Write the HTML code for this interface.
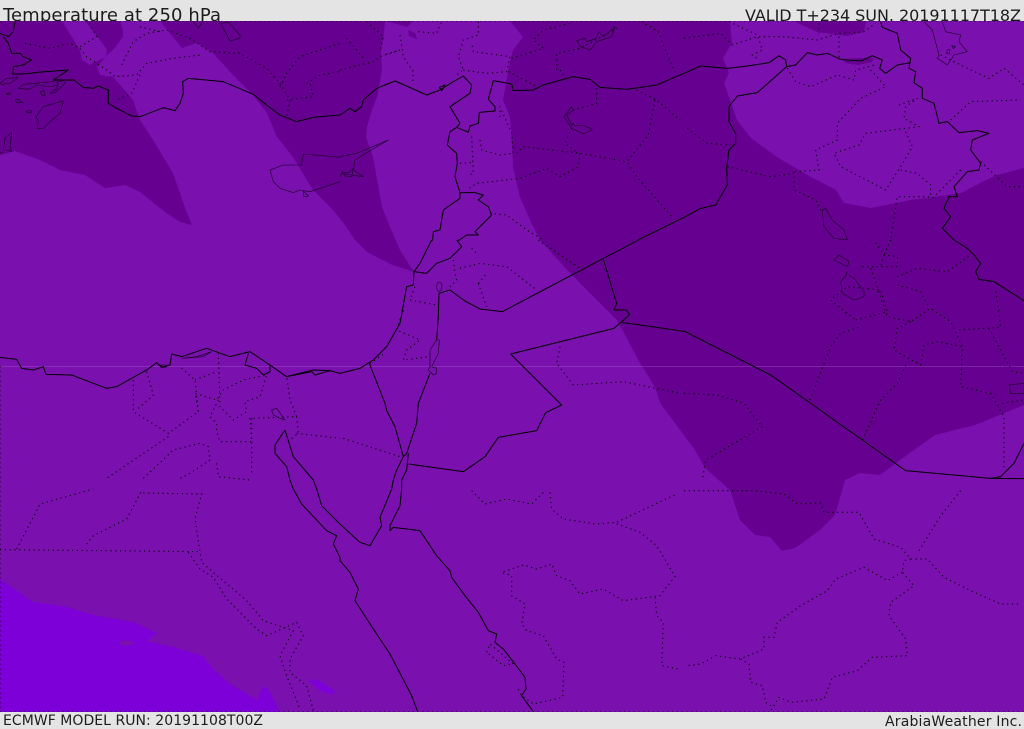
<!DOCTYPE html>
<html><head><meta charset="utf-8"><title>Temperature at 250 hPa</title>
<style>
html,body{margin:0;padding:0;background:#e4e4e4;width:1024px;height:729px;overflow:hidden}
svg{display:block;position:absolute;left:0;top:0}
text{font-family:"DejaVu Sans",sans-serif;fill:#1c1c1c}
path,ellipse{vector-effect:non-scaling-stroke}
.s path,.s ellipse{fill:none;stroke:#000;stroke-width:1;stroke-linejoin:round}
.t path,.t ellipse{fill:none;stroke:#14001f;stroke-width:.6;stroke-linejoin:round}
.d path{fill:none;stroke:#000;stroke-width:1.1;stroke-dasharray:1.2 3.6}
</style></head><body>
<svg width="1024" height="729" viewBox="0 0 1024 729" xmlns="http://www.w3.org/2000/svg">
<rect width="1024" height="729" fill="#e4e4e4"/>
<text x="3" y="21" font-size="18" textLength="218" lengthAdjust="spacing">Temperature at 250 hPa</text>
<text x="745" y="21" font-size="16" textLength="276" lengthAdjust="spacing">VALID T+234 SUN. 20191117T18Z</text>
<text x="3" y="725" font-size="14" textLength="260" lengthAdjust="spacing">ECMWF MODEL RUN: 20191108T00Z</text>
<text x="885" y="726" font-size="14" textLength="137" lengthAdjust="spacing">ArabiaWeather Inc.</text>

<rect x="0" y="21" width="1024" height="691" fill="#7a10ae"/>

<!-- dark regions -->
<g fill="#660090">
<path d="M0,21 L62,21 70,34 80,50 82,60 90,65 95,62 106,57 107,50 100,40 85,21 120,21 123,30 123,37 113,50 107,55 97,67 100,75 113,77 122,87 133,100 140,120 153,140 173,173 184,205 192,225 180,222 165,212 140,192 125,185 105,188 85,175 60,170 40,160 15,151 0,155Z"/>
<path d="M160,21 L173,37 182,48 197,43 213,53 233,75 253,95 267,113 277,137 293,157 305,177 313,190 333,210 345,225 355,240 367,252 390,264 414,272 400,250 390,227 382,207 379,190 373,157 366,137 367,127 372,110 377,97 382,70 381,53 384,33 385,21Z"/>
<path d="M385,21 L397,24 407,27 413,21Z"/>
<path d="M408,30 L415,33 417,39 409,36Z"/>
<path d="M510,21 L523,37 513,50 510,62 503,100 510,117 512,143 513,167 520,197 530,220 540,240 570,273 597,300 617,320 640,363 655,387 660,403 680,430 695,450 705,468 730,490 740,520 755,535 770,537 782,551 795,548 820,530 835,515 845,480 860,473 880,475 900,460 935,435 975,425 1024,405 1024,168 997,175 980,183 961,193 934,197 911,200 871,208 844,203 836,190 811,177 777,157 751,138 737,120 729,97 724,83 729,73 723,58 732,43 730,21Z"/>
<path d="M794,21 L817,32 847,36 864,32 866,21Z"/>
<path d="M841,59 L860,58 874,58 872,62 858,65 846,63Z"/>
</g>

<!-- bright region -->
<g fill="#7e00d8">
<path d="M0,579 L33,602 67,607 93,615 133,622 157,633 147,641 177,648 203,656 213,669 230,684 257,700 263,686 268,689 280,712 0,712Z"/>
<path d="M307,679 L320,681 335,691 333,695 320,691Z"/>
</g>
<ellipse cx="126" cy="643" rx="7" ry="2.5" fill="#7a10ae"/>

<!-- horizontal seam -->
<rect x="0" y="366" width="1024" height="1" fill="#b070d0" opacity=".3"/>

<!-- dotted borders -->
<g class="d">
<g transform="scale(.33333)">
<path d="M75,130 150,145 210,130 240,145 260,170 320,210 345,230 410,225 440,190 520,175 600,165"/>
<path d="M240,140 290,110 265,65"/>
<path d="M365,195 400,125 440,100 500,90 570,115 630,155 720,160 800,205 840,250 870,300 860,350"/>
<path d="M420,80 480,95"/>
<path d="M420,225 395,280 350,300"/>
<path d="M840,260 860,220 900,170 1020,130"/>
<path d="M920,250 960,225 1020,215"/>
<path d="M860,300 940,290 930,250"/>
</g>
<g transform="translate(340,0) scale(.33333)">
<path d="M20,115 75,180"/>
<path d="M0,210 100,185 120,170 180,150 130,165"/>
<path d="M80,65 130,110 120,150"/>
<path d="M180,105 190,170 220,215 218,250"/>
<path d="M235,95 290,100 305,65"/>
<path d="M415,65 415,105 370,120 355,170 370,210 350,225"/>
<path d="M370,210 440,220 500,215 510,170 400,155 395,130"/>
<path d="M505,215 590,260"/>
<path d="M515,175 610,145 580,120 610,90 690,70"/>
<path d="M650,210 650,160 720,145 830,85"/>
<path d="M905,65 955,95 980,160 1005,215"/>
<path d="M660,210 680,240"/>
<path d="M890,270 950,300 1020,360"/>
<path d="M945,300 925,405 860,485 890,530 1000,655"/>
<path d="M770,265 770,310 700,330"/>
<path d="M700,370 675,430 715,460"/>
<path d="M530,460 550,440 720,460 860,485"/>
<path d="M720,460 715,500 660,530 620,505 540,535 410,550 380,570"/>
<path d="M395,410 400,520 385,525"/>
<path d="M420,420 425,450 480,465 520,460 515,400 480,320 480,355"/>
<path d="M360,490 400,487"/>
<path d="M450,640 500,645 560,690 610,720"/>
</g>
<g transform="translate(684,0) scale(.33333)">
<path d="M0,115 110,100 145,135 220,110 300,110 400,120 465,100 540,95 575,70"/>
<path d="M135,65 220,105 235,150 205,165 225,180"/>
<path d="M405,70 405,100"/>
<path d="M465,110 465,175"/>
<path d="M310,205 335,245 380,260 460,225 510,240 515,210 570,195"/>
<path d="M560,210 605,260 530,295 460,370 460,420 395,450 405,510 330,515"/>
<path d="M330,515 330,570 395,600 415,640"/>
<path d="M130,500 260,530 330,520"/>
<path d="M645,315 700,295 665,320 660,355 705,380 545,400 525,435 450,460 470,500 605,570 650,500 685,440 660,385"/>
<path d="M650,510 700,520 740,555 740,590 640,590 635,620 620,720"/>
<path d="M800,360 860,305 1010,300"/>
<path d="M770,165 840,200 915,235 960,205 990,230 1020,255"/>
<path d="M890,485 970,560 1020,560"/>
<path d="M10,385 70,430 140,435"/>
<path d="M830,510 790,550 745,595"/>
</g>
<g transform="translate(0,240) scale(.33333)">
<path d="M400,420 400,515 505,580 595,515 585,420 540,380"/>
<path d="M440,395 460,465 410,510"/>
<path d="M505,590 320,715"/>
<path d="M595,515 585,460 650,480 670,450 730,420 800,405 780,470 735,485 740,515 700,540 660,500 655,340"/>
<path d="M585,420 650,395"/>
<path d="M655,480 630,530 650,550 650,575 660,605 755,605 750,535 890,530 870,480 860,410"/>
<path d="M755,535 755,700"/>
<path d="M890,580 1020,595"/>
<path d="M890,530 895,580 870,600"/>
<path d="M430,715 520,630 600,610 625,620 630,660 570,700 540,715"/>
<path d="M650,670 655,710 700,715 750,720"/>
</g>
<g transform="translate(340,240) scale(.33333)">
<path d="M595,0 720,85"/>
<path d="M340,60 345,100 350,120 330,140"/>
<path d="M360,85 420,70 500,80 590,150"/>
<path d="M415,130 440,100"/>
<path d="M415,130 440,200"/>
<path d="M225,140 210,180 290,195"/>
<path d="M190,210 170,270 240,300 200,330 190,360 270,350"/>
<path d="M660,320 650,370 700,435 850,425 1020,460"/>
<path d="M10,595 180,650"/>
<path d="M395,25 410,40"/>
<path d="M90,370 135,340"/>
</g>
<g transform="translate(684,240) scale(.33333)">
<path d="M0,460 100,465 180,490 235,560 65,660 55,720"/>
<path d="M378,480 440,320 470,280 530,260"/>
<path d="M515,240 610,215 590,150 490,140 440,180 515,240"/>
<path d="M535,80 590,80 640,80 640,50 600,45 570,0"/>
<path d="M600,45 590,80"/>
<path d="M620,0 600,45"/>
<path d="M560,85 610,230 680,245 740,205 800,245 835,320 830,440 920,460 960,530 960,690"/>
<path d="M640,110 700,85 790,95 860,45"/>
<path d="M640,135 710,155 735,205"/>
<path d="M680,245 640,265 630,330 710,375 720,315 760,305 835,320"/>
<path d="M665,375 640,430 590,480 535,600"/>
<path d="M825,270 950,262 935,150"/>
<path d="M915,265 985,395 1020,400"/>
<path d="M955,490 1020,480"/>
</g>
<g transform="translate(0,489) scale(.33333)">
<path d="M0,182 605,188"/>
<path d="M50,180 120,45 280,0"/>
<path d="M260,165 280,140 380,90 425,5"/>
<path d="M430,12 605,15 585,90 605,220 740,335 790,395 880,425 840,500 860,560 900,660"/>
<path d="M565,190 600,240 640,265 680,330 770,420 800,440 890,400 910,440 870,510 870,550 920,590 940,665"/>
</g>
<g transform="translate(340,489) scale(.33333)">
<path d="M395,5 435,45 500,30 575,45 610,10"/>
<path d="M630,10 635,60 670,90 770,105 830,100 1010,15"/>
<path d="M830,105 900,130 950,170 1005,262 960,320 850,335 790,300 720,315 690,275 650,260 635,225 590,240 550,228 485,250 515,260 515,320 555,345 545,405 560,425 610,440 650,510 672,520 668,625 580,645 545,620 535,600"/>
<path d="M945,325 950,380 970,400 965,530 1015,540"/>
<path d="M440,490 450,465 520,525 490,530 440,490"/>
</g>
<g transform="translate(684,489) scale(.33333)">
<path d="M0,5 100,5 210,5 300,15 340,45 410,42 420,70 525,70 570,150 650,175 680,210 730,210 780,265 860,305 950,345 1010,345"/>
<path d="M705,185 770,80 830,5"/>
<path d="M680,210 660,215 655,250 690,290 620,340 615,380 665,450 670,500 565,505 520,545 445,565 420,630 320,640 285,625 260,665"/>
<path d="M655,250 610,275 540,235 455,270 430,305 350,350 280,400 270,445 240,445 240,480 170,510 95,500 50,525 10,530"/>
<path d="M170,510 195,525 200,580 235,590 245,640 260,650"/>
</g>
<path d="M0,366V712"/>
<path d="M0,21.5H1024" opacity=".5"/>
<path d="M0,711.5H1024" opacity=".5"/>
</g>

<!-- solid coasts and borders -->
<g class="s">
<g transform="scale(.33333)">
<path d="M45,65 40,95 25,110 0,100"/>
<path d="M10,110 25,130 35,160 60,160 70,170 95,180 70,195 40,200 38,222 70,222 135,215 205,210 160,240 190,240 222,240 250,262 280,265 295,258 325,270 325,310 350,325 395,348 420,350 490,323 525,332 540,310 550,280 548,245 565,235 670,245 760,283 800,315 840,345 890,365 940,352 1020,345"/>
</g>
<g class="t" transform="scale(.33333)">
<path d="M0,250 20,235 55,233 30,250 5,253Z"/>
<path d="M55,265 70,253 160,245 165,240 175,255 150,260 110,255 85,268Z"/>
<path d="M150,280 165,278 190,255 200,240 175,245 170,265Z"/>
<path d="M120,275 132,272 135,288 125,285Z"/>
<path d="M20,280 30,278 30,284 20,284Z"/>
<path d="M45,300 55,297 68,308 50,308Z"/>
<path d="M80,333 95,332 95,337 80,337Z"/>
<path d="M108,350 130,320 190,302 180,340 150,365 130,385 112,385 115,365Z"/>
<path d="M10,450 15,415 35,397 30,440 35,455 20,450Z"/>
<path d="M0,460 10,455"/>
<path d="M810,510 820,545 840,565 880,578 900,570 930,575 1020,545"/>
<path d="M810,510 850,495 905,495 910,462 1020,472"/>
<path d="M910,573 925,588 912,590Z"/>
<path d="M580,65 595,85 608,65"/>
<path d="M662,70 685,67 720,105 720,115 690,123 675,95Z"/>
</g>
<g transform="translate(340,0) scale(.33333)">
<path d="M0,345 30,325 45,335 65,320 70,300 110,265 165,243 200,258 260,285 300,270 340,245 370,228 395,255 390,280 330,320 360,370"/>
<path d="M350,382 385,397 390,378 415,370 418,337 465,333 465,320 445,298 460,242 515,252 520,272 580,270 610,255 700,230 750,238 780,262 860,268 950,255 1032,220"/>
<path d="M360,370 350,382 330,395 322,435 350,460 352,490 345,530 360,578 405,578 430,585 415,600 445,620 455,645 405,695 415,705 380,705 358,720 350,722"/>
<path d="M360,578 360,595 310,630 300,690 280,695 278,720 275,722"/>
<path d="M298,262 315,255 305,272Z"/>
</g>
<g class="t" transform="translate(340,0) scale(.33333)">
<path d="M0,470 50,460 145,420 85,455 45,480 40,510 70,530 35,525 5,520 0,530"/>
<path d="M5,515 25,518 40,505 35,530 15,528Z"/>
<path d="M710,122 735,115 740,125 770,115 775,95 790,110 825,80 815,110 770,125 750,150 722,140Z"/>
<path d="M695,320 700,330 680,345 695,375 735,378 757,388 730,402 695,385 672,350Z"/>
</g>
<g transform="translate(684,0) scale(.33333)">
<path d="M0,220 50,198 130,205 190,198 255,188 285,167 305,180 308,200 335,195 370,158 400,165 430,160 470,178 530,183 565,167 595,180 587,205 605,220 640,195 680,188"/>
<path d="M590,65 595,82 640,100 650,150 680,175 675,205 695,215 690,248 715,265 715,295 750,310 765,370 790,365 825,398 880,392 915,400 865,420 860,450 890,490 885,510 850,515 810,560 820,590 795,590 780,625 800,650 775,685 810,720"/>
<path d="M308,200 220,278 160,288 135,320 135,365 155,400 155,430 135,450 128,500 130,555 95,615 50,625 0,652 -138,720"/>
</g>
<g class="t" transform="translate(684,0) scale(.33333)">
<path d="M720,65 745,90 765,165 760,175 790,195 810,165 850,155 825,125 830,105 785,95 775,65"/>
<path d="M790,150 798,148 796,162 788,160Z"/>
<path d="M803,137 815,140 808,146Z"/>
<path d="M415,630 425,625 445,660 480,690 490,720 450,715 420,680Z"/>
</g>
<g transform="translate(0,240) scale(.33333)">
<path d="M0,352 50,358 65,385 100,390 130,380 138,403 215,405 280,430 320,445 350,440 440,390 470,368 485,382 510,375 515,342 545,350 620,325 690,350 750,335 810,375 860,410 940,390 990,392 1020,400"/>
<path d="M745,340 735,375 770,385 790,405 810,395 810,375"/>
<path d="M860,410 935,395 945,405 990,392"/>
<path d="M855,570 825,615 825,640 860,680 870,720 880,747"/>
<path d="M855,570 880,650 940,720 950,747"/>
</g>
<g class="t" transform="translate(0,240) scale(.33333)">
<path d="M545,355 610,350 635,335 590,350Z"/>
<path d="M480,375 505,375 495,383Z"/>
<path d="M815,510 830,505 855,540 840,535 820,525Z"/>
</g>
<g transform="translate(340,240) scale(.33333)">
<path d="M895,0 487,215 420,207 375,183 330,150 297,160 295,230 290,300"/>
<path d="M790,58 830,190 822,210 860,210 868,225 822,265 512,342 665,495 617,518 590,572 475,592 435,650 370,695 205,672"/>
<path d="M845,247 1032,274"/>
<path d="M88,370 135,490 140,512 165,560 190,650"/>
<path d="M0,400 60,385 100,360 140,320 180,250 200,140 220,135 222,95 260,100 290,70 330,55 350,35 365,20 350,0"/>
<path d="M275,0 240,70 222,95"/>
<path d="M270,400 235,490 230,550 200,640 190,650"/>
<path d="M190,650 170,690 160,720 155,747"/>
<path d="M205,640 200,690 185,720 185,747"/>
</g>
<g class="t" transform="translate(340,240) scale(.33333)">
<path d="M290,300 270,330 270,380 265,390 280,405 290,400 290,385 275,380 295,340 298,300Z"/>
<ellipse cx="298" cy="140" rx="8" ry="14"/>
</g>
<g transform="translate(684,240) scale(.33333)">
<path d="M810,0 850,25 870,45 890,70 875,95 885,118 930,125 1020,182"/>
<path d="M0,273 260,405 665,692 920,715 950,710 990,670 1020,610"/>
<path d="M920,715 1020,716"/>
</g>
<g class="t" transform="translate(684,240) scale(.33333)">
<path d="M450,60 465,45 495,65 490,80 470,70Z"/>
<path d="M487,95 487,105 470,125 475,160 510,180 540,170 540,155 510,115 495,105"/>
<path d="M975,435 1020,430 1020,460 980,460Z"/>
</g>
<g transform="translate(0,489) scale(.33333)">
<path d="M880,0 905,45 980,125 1010,140 1000,165 1020,205 1020,215"/>
<path d="M950,0 965,50 1020,105"/>
</g>
<g transform="translate(340,489) scale(.33333)">
<path d="M155,0 120,85 125,110 90,170 60,160 0,105"/>
<path d="M185,0 180,50 150,110 150,125 160,115 240,125 290,200 330,245 335,265 375,320 415,370 445,425 470,435 465,460 490,480 525,525 555,565 558,600 545,620 578,665"/>
<path d="M0,215 30,250 55,300 45,335 100,420 150,495 215,620 233,668"/>
</g>
</g>
</svg>
</body></html>
